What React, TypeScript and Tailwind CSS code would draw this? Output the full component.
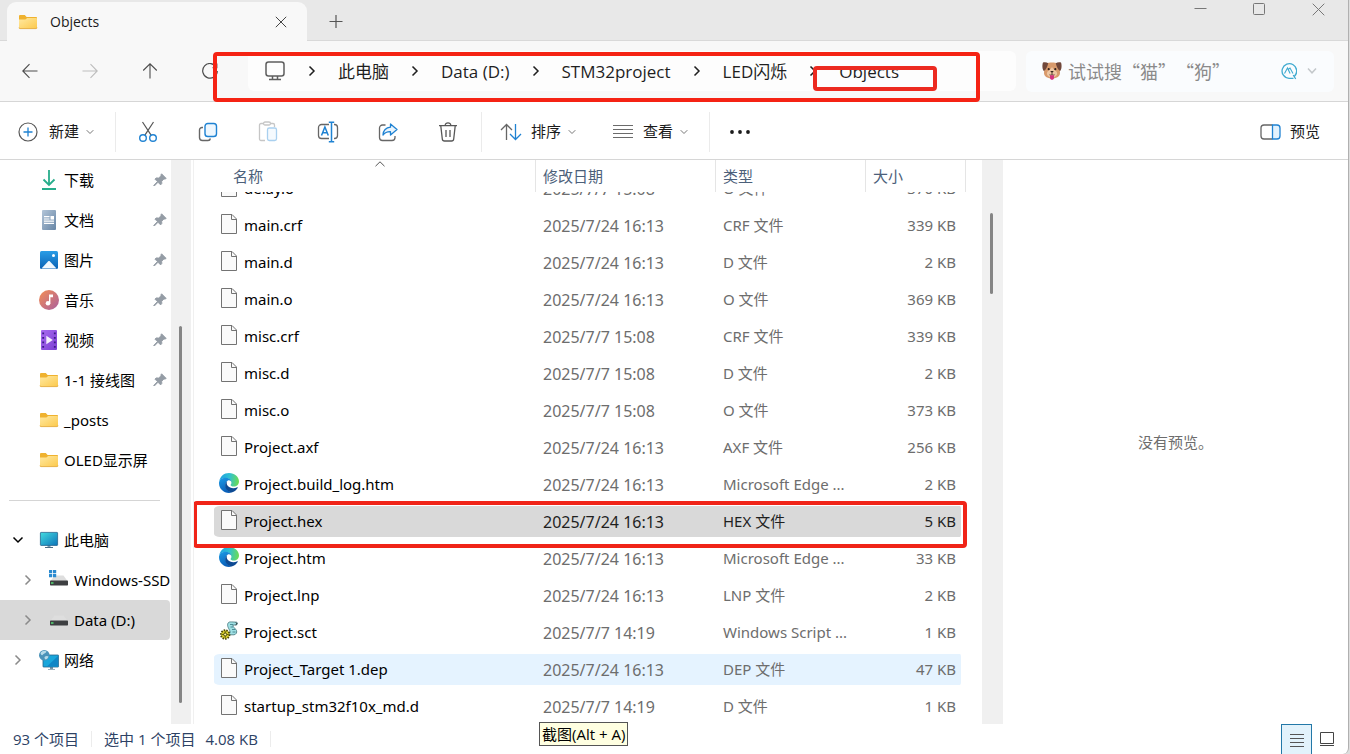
import React, { useEffect, useRef } from 'react';

interface IconProps {
  className?: string
}

const Folder: React.FC = () => (
  <svg width="20" height="16" viewBox="0 0 20 16" className="shrink-0">
    <defs>
      <linearGradient id="folder" x1="0" y1="0" x2="1" y2="1">
        <stop offset="0" stopColor="#ffe9a2" />
        <stop offset="1" stopColor="#fcc94c" />
      </linearGradient>
    </defs>
    <path d="M1 2.2C1 1.5 1.500 1 2.200 1h4.600l1.800 2H18c.6 0 1 .4 1 1v3H1z" fill="#efb22f" />
    <path d="M1 5.600h6.400L9.200 4H18c.6 0 1 .4 1 1v8.600c0 .6-.4 1-1 1H2c-.6 0-1-.4-1-1z" fill="url(#folder)" />
    <path d="M1 13.600c0 .6.4 1 1 1h16c.6 0 1-.4 1-1" fill="none" stroke="#dfa22c" strokeWidth=".8" />
  </svg>
);

const Chevron: React.FC<IconProps> = ({ className }) => (
  <svg width="10" height="12" viewBox="0 0 10 12" fill="none" stroke="currentColor" className={className}>
    <path d="M2.500 1.500 7 6l-4.500 4.500" strokeWidth="1.500" />
  </svg>
);

const ChevronDown: React.FC<IconProps> = ({ className }) => (
  <svg width="8" height="6" viewBox="0 0 8 6" fill="none" stroke="currentColor" className={className}>
    <path d="M.7 1.200 4 4.500l3.300-3.300" />
  </svg>
);

const Arrow: React.FC<IconProps> = ({ className }) => (
  <svg width="16" height="16" viewBox="0 0 16 16" fill="none" stroke="currentColor" strokeWidth="1.100" className={className}>
    <path d="M15.500 8H1M7.500 1.200.8 8l6.700 6.800" />
  </svg>
);

const Pin: React.FC = () => (
  <svg width="14" height="14" viewBox="0 0 14 14" className="shrink-0">
    <path d="M8.600.8 13.200 5.400 12 6.100 10.900 6 8.700 8.300l.1 2.300-1.200 1.300-2.600-2.600L1.300 13l-.6-.6L4.400 8.600 1.900 6.100l1.400-1.200 2.300.1L8 2.900V1.700z" fill="#949ca5" stroke="#949ca5" strokeWidth=".9" strokeLinejoin="round" />
  </svg>
);

const DownloadIcon: React.FC = () => (
  <svg width="20" height="20" viewBox="0 0 20 20" fill="none" stroke="#27ad8b" strokeWidth="1.800">
    <path d="M10 0v15M4.500 9.500 10 15l5.500-5.500M3 19h14" />
  </svg>
);

const DocumentIcon: React.FC = () => (
  <svg width="20" height="20" viewBox="0 0 20 20">
    <defs>
      <linearGradient id="doc" x1="0" y1="0" x2="1" y2="1">
        <stop offset="0" stopColor="#b3c5d8" />
        <stop offset="1" stopColor="#6685a5" />
      </linearGradient>
    </defs>
    <rect x="3" width="14" height="20" rx="1" fill="url(#doc)" />
    <path d="M5 6.600h5.500M5 9h5.500M5 11.200h10M5 13.400h10" stroke="#fff" strokeWidth="1.200" />
    <path d="M11.500 6h3.500v3.600h-3.500z" fill="#fff" />
  </svg>
);

const PictureIcon: React.FC = () => (
  <svg width="20" height="20" viewBox="0 0 20 20">
    <defs>
      <linearGradient id="pic" x1="0" y1="0" x2="0" y2="1">
        <stop offset="0" stopColor="#2a9de6" />
        <stop offset="1" stopColor="#0b62b5" />
      </linearGradient>
    </defs>
    <rect x="1" y="1" width="18" height="18" rx="1.500" fill="url(#pic)" />
    <path d="M2.500 18.500 9 11.400c.6-.6 1.400-.6 2 0l6.500 7.100z" fill="#f1f8fe" />
    <circle cx="14.500" cy="5.500" r="1.500" fill="#fff" />
  </svg>
);

const MusicIcon: React.FC = () => (
  <svg width="20" height="20" viewBox="0 0 20 20">
    <defs>
      <linearGradient id="music" x1="0" y1="0" x2="1" y2="1">
        <stop offset="0.100" stopColor="#ed8a5b" />
        <stop offset="1" stopColor="#a95f9f" />
      </linearGradient>
    </defs>
    <circle cx="10" cy="10" r="10" fill="url(#music)" />
    <path d="M10 4.500h4v2.800h-2.600v6.200h-1.400z" fill="#fff" />
    <circle cx="9" cy="13.200" r="2.300" fill="#fff" />
  </svg>
);

const VideoIcon: React.FC = () => (
  <svg width="20" height="20" viewBox="0 0 20 20">
    <defs>
      <linearGradient id="video" x1="0" y1="0" x2="1" y2="1">
        <stop offset="0" stopColor="#a86af0" />
        <stop offset="1" stopColor="#7b3fd2" />
      </linearGradient>
    </defs>
    <rect x="2" width="16" height="20" rx="1" fill="url(#video)" />
    <path d="M4.200 2.500v16M15.800 2.500v16" stroke="#3b1b85" strokeWidth="1.800" strokeDasharray="1.800 2.700" />
    <path d="M7.300 5.800v8.400l6.500-4.200z" fill="#f5effd" />
  </svg>
);

const PcIcon: React.FC = () => (
  <svg width="20" height="18" viewBox="0 0 20 18">
    <defs>
      <linearGradient id="screen" x1="0" y1="0" x2="1" y2="1">
        <stop offset="0" stopColor="#43dbe0" />
        <stop offset="1" stopColor="#0d74b9" />
      </linearGradient>
    </defs>
    <path d="M8.500 14h3v2.500h-3z" fill="#7d9bb0" />
    <path d="M6 16h8v1H6z" fill="#4c6b82" />
    <rect x="1.400" y="1.400" width="17.200" height="13" rx=".6" fill="url(#screen)" stroke="#23648e" strokeWidth=".8" />
  </svg>
);

const DriveIcon: React.FC<{ system?: boolean }> = ({ system }) => (
  <svg width="20" height="20" viewBox="0 0 20 20" className="shrink-0">
    <path d="M5.500 5.500h9L18.500 11h-17z" fill="#dedede" />
    <rect x="1" y="10.500" width="18" height="5" rx=".7" fill="#3d3f41" />
    <rect x="2" y="12.300" width="2.500" height="1.400" fill="#57e57a" />
    {system && <path d="M0 0h3.200v3.200H0zM4 0h3.200v3.200H4zM0 4h3.200v3.200H0zM4 4h3.200v3.200H4z" fill="#2a8ad0" />}
  </svg>
);

const NetworkIcon: React.FC = () => (
  <svg width="20" height="20" viewBox="0 0 20 20">
    <path d="M11 17h3v2h-3zM9 19h7v.8H9z" fill="#7896a8" />
    <rect x="4" y="5" width="15.600" height="12" rx=".6" fill="#19a6db" stroke="#23648e" strokeWidth=".8" />
    <path d="M19 16.500 19 6 8 16.500z" fill="#0f86c6" />
    <circle cx="5.300" cy="5.300" r="5.300" fill="#4b93b9" />
    <path d="M1.500 3C3 .8 6 .2 7.500 1.500 7 3.500 5 3 4 4.500S2 5 1.500 3zM6 6.500c1.500-1 3-.5 3.500 0C9 8.500 7.500 9.500 6.500 9.500 5.500 8.500 5 7.500 6 6.500z" fill="#b6dbe9" />
  </svg>
);

const FileIcon: React.FC = () => (
  <svg width="20" height="20" viewBox="0 0 20 20">
    <path d="M2.500.5h10.500L17.500 5v14.500h-15z" fill="#fafafa" stroke="#737373" />
    <path d="M12.500.5v5h5" fill="none" stroke="#737373" />
  </svg>
);

const EdgeIcon: React.FC = () => (
  <svg width="20" height="20" viewBox="0 0 20 20">
    <defs>
      <linearGradient id="edgeTop" x1="0" y1=".3" x2="1" y2=".4">
        <stop offset="0" stopColor="#1fa0e0" />
        <stop offset=".5" stopColor="#2fc0d2" />
        <stop offset="1" stopColor="#6bdc55" />
      </linearGradient>
      <linearGradient id="edgeLeft" x1="0" y1="0" x2="0.400" y2="1">
        <stop offset="0" stopColor="#1c9be6" />
        <stop offset="1" stopColor="#0a5fb8" />
      </linearGradient>
    </defs>
    <path d="M.3 8.300C1 3.500 5 0 10 0c5.600 0 10 4 10 8.400 0 3.100-2.400 5.100-5.200 5.100-2 0-3.300-.7-3.300-1.500 0-.5.900-.9.900-2.300C12.400 7.200 9.700 5 6.300 5 3.500 5 1.200 6.500.3 8.300z" fill="url(#edgeTop)" />
    <path d="M0 10.300C0 7 3 4.800 6.300 4.800c3.200 0 5.400 1.700 6 3.700-.9-.9-2.200-1.300-3.300-1.100-2.500.9-2.900 4.800-1.600 7.500 1.100 2.400 3.400 4 5.200 4.700-.8.300-1.700.4-2.600.4-5.500 0-10-4.400-10-9.700z" fill="url(#edgeLeft)" />
    <path d="M8.500 7.700c-3 2.300-2.600 6.200-1 8.600 1.300 2 3.300 3.200 5.100 3.300 2.900-.8 4.900-2.700 6.200-4.900.2-.4-.1-.6-.5-.4-3.600 1.600-7.600.9-9.600-1.600-1.300-1.700-1.300-3.700-.2-5z" fill="#0d4a93" />
  </svg>
);

const ScriptIcon: React.FC = () => (
  <svg width="20" height="20" viewBox="0 0 20 20">
    <path d="M9 2.200C9.500 1 11 .8 12.500.9l5 .3c1.500.3 1.200 2.500-.3 2.800L14 4c-.8 1.500 2.500 3.500 3.500 5.500.8 2-.5 4-2.500 4.300H9c1.500-1 2.500-2 2-3.500C10.500 8.500 7.500 5 9 2.200z" fill="#9fe0e4" stroke="#3f7279" strokeWidth=".8" />
    <path d="M11 3.500h3M11.500 6h2.500M13 8.500h3M13.500 11h3" stroke="#387780" strokeWidth=".8" />
    <path d="M17 1.500c1 .8.800 2-.3 2.300" stroke="#222" fill="none" />
    <circle cx="6.200" cy="13.500" r="4.300" fill="#d9cf2d" stroke="#4d4908" strokeWidth="1.800" strokeDasharray="1.500 1.100" />
    <circle cx="6.200" cy="13.500" r="1.500" fill="#fff9a8" stroke="#4d4908" />
    <path d="M6.200 10v2M6.200 15v2M2.800 13.500h2M7.700 13.500h2" stroke="#4d4908" strokeWidth=".8" />
  </svg>
);

const DogIcon: React.FC = () => (
  <svg width="20" height="18" viewBox="0 0 20 18" className="shrink-0">
    <path d="M4.500 1.500C7 .2 13 .2 15.500 1.500c1.800 3 2.500 6.500 2.500 9.500 0 3-3 5.500-8 5.500S2 14 2 11c0-3 .7-6.500 2.500-9.500z" fill="#d89a6c" />
    <path d="M10 5c1 2 2.500 2.500 4 4 1.500 1.800 1.500 3.500 0 5-2 1.800-6 1.800-8 0-1.500-1.500-1.500-3.200 0-5 1.500-1.500 3-2 4-4z" fill="#eec6a2" />
    <path d="M1 .5C3 0 5 .3 6.200 1.300 5.500 4 4.500 7.500 2 9 .3 8 0 3 1 .5zM19 .5c-2-.5-4-.2-5.200.8.7 2.700 1.700 6.200 4.200 7.700 1.700-1 2-6 1-8.500z" fill="#70473a" />
    <circle cx="6.700" cy="7.200" r="1.100" fill="#34221d" />
    <circle cx="13.300" cy="7.200" r="1.100" fill="#34221d" />
    <path d="M8.200 9h3.600L10 11z" fill="#34221d" />
    <path d="M10 10.500v2M7.500 12.800c1 .5 2 .3 2.500-.4.500.7 1.500.9 2.500.4" stroke="#34221d" fill="none" strokeWidth=".8" />
    <path d="M8 13.200h4v2.600c0 2.700-4 2.700-4 0z" fill="#d43480" />
  </svg>
);

const pinned = [
  { name: '下载', icon: <DownloadIcon />, pin: true },
  { name: '文档', icon: <DocumentIcon />, pin: true },
  { name: '图片', icon: <PictureIcon />, pin: true },
  { name: '音乐', icon: <MusicIcon />, pin: true },
  { name: '视频', icon: <VideoIcon />, pin: true },
  { name: '1-1 接线图', icon: <Folder />, pin: true },
  { name: '_posts', icon: <Folder />, pin: false },
  { name: 'OLED显示屏', icon: <Folder />, pin: false },
];

const path = ['此电脑', 'Data (D:)', 'STM32project', 'LED闪烁', 'Objects'];

interface FileRow {
  name: string
  date: string
  type: string
  size: string
  icon?: 'edge' | 'script'
  state?: 'selected' | 'hover'
}

const files: FileRow[] = [
  { name: 'delay.o', date: '2025/7/7 15:08', type: 'O 文件', size: '370 KB' },
  { name: 'main.crf', date: '2025/7/24 16:13', type: 'CRF 文件', size: '339 KB' },
  { name: 'main.d', date: '2025/7/24 16:13', type: 'D 文件', size: '2 KB' },
  { name: 'main.o', date: '2025/7/24 16:13', type: 'O 文件', size: '369 KB' },
  { name: 'misc.crf', date: '2025/7/7 15:08', type: 'CRF 文件', size: '339 KB' },
  { name: 'misc.d', date: '2025/7/7 15:08', type: 'D 文件', size: '2 KB' },
  { name: 'misc.o', date: '2025/7/7 15:08', type: 'O 文件', size: '373 KB' },
  { name: 'Project.axf', date: '2025/7/24 16:13', type: 'AXF 文件', size: '256 KB' },
  { name: 'Project.build_log.htm', date: '2025/7/24 16:13', type: 'Microsoft Edge ...', size: '2 KB', icon: 'edge' },
  { name: 'Project.hex', date: '2025/7/24 16:13', type: 'HEX 文件', size: '5 KB', state: 'selected' },
  { name: 'Project.htm', date: '2025/7/24 16:13', type: 'Microsoft Edge ...', size: '33 KB', icon: 'edge' },
  { name: 'Project.lnp', date: '2025/7/24 16:13', type: 'LNP 文件', size: '2 KB' },
  { name: 'Project.sct', date: '2025/7/7 14:19', type: 'Windows Script ...', size: '1 KB', icon: 'script' },
  { name: 'Project_Target 1.dep', date: '2025/7/24 16:13', type: 'DEP 文件', size: '47 KB', state: 'hover' },
  { name: 'startup_stm32f10x_md.d', date: '2025/7/7 14:19', type: 'D 文件', size: '1 KB' },
];

const TitleBar: React.FC = () => (
  <header className="flex h-[41px] shrink-0 bg-[#e8e8e8] shadow-[inset_0_-1px_0_#d9d9d9]">
    <div className="relative ml-[7px] mt-0.5 flex w-[300px] items-center rounded-t-[9px] bg-[#f8f8f8] pl-[11px] pr-5">
      <Folder />
      <span className="ml-3 flex-1 text-[14px] font-medium text-[#1b1b1b]">Objects</span>
      <button aria-label="关闭标签页">
        <svg width="12" height="12" viewBox="0 0 12 12" stroke="#444" fill="none">
          <path d="m.8.800 10.400 10.400M11.200.800.8 11.200" />
        </svg>
      </button>
    </div>
    <button aria-label="新建标签页" className="ml-[22px]">
      <svg width="14" height="14" viewBox="0 0 14 14" stroke="#555" fill="none">
        <path d="M7 1v13M.5 7.500h13" strokeWidth="1.200" />
      </svg>
    </button>
    <div className="ml-auto flex items-start text-[#777]">
      <button aria-label="最小化" className="flex h-[18px] w-[59px] items-center justify-center">
        <svg width="13" height="13" viewBox="0 0 13 13" stroke="currentColor"><path d="M.5 5.500h12" /></svg>
      </button>
      <button aria-label="最大化" className="flex h-[18px] w-[59px] items-center justify-center">
        <svg width="13" height="13" viewBox="0 0 13 13" stroke="currentColor" fill="none"><rect x=".5" y=".5" width="11" height="11" rx="1" /></svg>
      </button>
      <button aria-label="关闭" className="flex h-[18px] w-[59px] items-center justify-center">
        <svg width="13" height="13" viewBox="0 0 13 13" stroke="currentColor" fill="none"><path d="m.7.700 11.600 11.600M12.300.700.7 12.300" /></svg>
      </button>
    </div>
  </header>
);

const NavBar: React.FC = () => (
  <nav className="relative flex h-[61px] shrink-0 items-center border-b border-[#d6d6d6] bg-[#f8f8f8] pr-3.5 text-[#4c4c4c]">
    <button aria-label="后退" className="flex w-[60px] justify-center"><Arrow /></button>
    <button aria-label="前进" className="flex w-[60px] justify-center text-[#bdbdbd]"><Arrow className="rotate-180" /></button>
    <button aria-label="向上" className="flex w-[60px] justify-center"><Arrow className="rotate-90" /></button>
    <button aria-label="刷新" className="flex w-[60px] justify-center">
      <svg width="16" height="16" viewBox="0 0 16 16" fill="none" stroke="currentColor" strokeWidth="1.200">
        <path d="M14.500 4.500A7.300 7.300 0 1 0 15.300 8M14.800.500v4.200h-4.200" />
      </svg>
    </button>
    <div className="ml-2 flex h-10 flex-1 items-center rounded-md bg-[#fdfdfd] pl-4 text-[#1f1f1f]">
      <svg width="22" height="20" viewBox="0 0 22 20" fill="none" stroke="#5e5e5e" strokeWidth="1.500">
        <rect x="2" y="1" width="18" height="14" rx="2.500" />
        <path d="M8.500 15v3.500M13.500 15v3.500M5 18.600h12" />
      </svg>
      {path.map((item) => (
        <React.Fragment key={item}>
          <span className="flex w-[52px] justify-center"><Chevron /></span>
          <a href="#" className="pt-px text-[17px]">{item}</a>
        </React.Fragment>
      ))}
    </div>
    <div className="ml-2.5 flex h-[41px] w-[308px] items-center rounded-md bg-[#fafcfe] pl-4 pr-[17px]">
      <DogIcon />
      <input
        aria-label="搜索"
        placeholder="试试搜“猫”“狗”"
        className="ml-1.5 min-w-0 flex-1 bg-transparent font-['Noto_Sans_CJK_SC',sans-serif] text-[18px] outline-none [text-spacing-trim:space-all] placeholder:text-[#8a8a8a]"
      />
      <svg width="16" height="17" viewBox="0 0 16 17" fill="none" stroke="#41abd0">
        <path d="M13.500 13.200A7.300 7.300 0 1 0 8 15.300h4.500M12.200 12l2.500 4" strokeWidth="1.300" />
        <path d="m3.500 10.500 3-5.500 2.600 5.500M7.500 6.200 9 5l3 5.500" strokeWidth="1.100" />
      </svg>
      <svg width="10" height="8" viewBox="0 0 10 8" fill="none" stroke="#c4c8cb" strokeWidth="1.500" className="ml-[10px]">
        <path d="m1 1.500 4 4.300 4-4.300" />
      </svg>
    </div>
    {/* highlight frames over the path */}
    <div className="pointer-events-none absolute bottom-[-1px] left-[213px] right-[368px] top-[11px] rounded-sm border-4 border-[#f52314]" />
    <div className="pointer-events-none absolute left-[813px] top-[25px] h-[25px] w-[124px] rounded-sm border-4 border-[#ec2a20]" />
  </nav>
);

const Separator: React.FC = () => <div className="h-10 w-px bg-[#ebebeb]" />;

const tool = 'flex w-[60px] justify-center';

const Toolbar: React.FC = () => (
  <div className="flex h-[58px] shrink-0 items-center border-b border-[#d6d6d6] bg-white pt-0.5 text-[15px] text-[#1b1b1b]">
    <button className="flex w-[115px] items-center pl-[18px]">
      <svg width="20" height="20" viewBox="0 0 20 20" fill="none">
        <circle cx="10" cy="10" r="9" stroke="#575757" strokeWidth="1.200" />
        <path d="M10 5.500v9M5.500 10h9" stroke="#1f82d2" strokeWidth="1.300" />
      </svg>
      <span className="ml-[11px]">新建</span>
      <ChevronDown className="ml-[7px] text-[#777]" />
    </button>
    <Separator />
    <div className="ml-0.5 mr-[3px] flex items-center">
      <button aria-label="剪切" className={tool}>
        <svg width="20" height="22" viewBox="0 0 20 22" fill="none" strokeWidth="1.200">
          <path d="m4.500 1 8.600 13.200M15.500 1 6.900 14.200" stroke="#575757" />
          <circle cx="5" cy="17" r="3.300" stroke="#1f82d2" strokeWidth="1.400" />
          <circle cx="15" cy="17" r="3.300" stroke="#1f82d2" strokeWidth="1.400" />
        </svg>
      </button>
      <button aria-label="复制" className={tool}>
        <svg width="20" height="20" viewBox="0 0 20 20" fill="none" strokeWidth="1.400">
          <path d="M5 5.500H4a2.500 2.500 0 0 0-2.500 2.500v7.500A3 3 0 0 0 4.500 18.500h5.500a2.500 2.500 0 0 0 2.400-2" stroke="#666" />
          <rect x="7" y="1.500" width="11.500" height="13" rx="2.800" stroke="#1f82d2" fill="#eef7fe" />
        </svg>
      </button>
      <button aria-label="粘贴" className={tool}>
        <svg width="20" height="21" viewBox="0 0 20 21" fill="none" strokeWidth="1.300">
          <path d="M7 19.500H3A1.500 1.500 0 0 1 1.500 18V4A1.500 1.500 0 0 1 3 2.500h2.500M12.500 2.500H15A1.500 1.500 0 0 1 16.500 4v2" stroke="#c6c6c6" />
          <rect x="5.500" y="1" width="7" height="3" rx="1.500" stroke="#c6c6c6" />
          <rect x="9.500" y="7" width="9" height="12.500" rx="1.800" stroke="#a9d0ef" fill="#f5fafe" />
        </svg>
      </button>
      <button aria-label="重命名" className={tool}>
        <svg width="22" height="22" viewBox="0 0 22 22" fill="none" strokeWidth="1.300">
          <path d="M12 3.500H4.500A3 3 0 0 0 1.500 6.500v8a3 3 0 0 0 3 3H12M17 3.500h.5a3 3 0 0 1 3 3v8a3 3 0 0 1-3 3H17" stroke="#666" />
          <path d="M14.500 1.500v19M11.800 1.200h5.400M11.800 20.700h5.400" stroke="#1f82d2" strokeWidth="1.500" />
          <path d="m4.500 14.500 3.400-8.500 3.400 8.500M5.700 11.700h4.500" stroke="#1f82d2" strokeWidth="1.500" />
        </svg>
      </button>
      <button aria-label="共享" className={tool}>
        <svg width="20" height="20" viewBox="0 0 20 20" fill="none" strokeWidth="1.300" strokeLinejoin="round">
          <path d="M7.500 3H4.500a3 3 0 0 0-3 3v9.500a3 3 0 0 0 3 3h9.500a3 3 0 0 0 3-3V14" stroke="#666" />
          <path d="M12.500 2 19 7.500l-6.500 5.500v-3.300C9 9.500 7 10.500 5 13c.3-4.500 3-7.300 7.500-7.800z" stroke="#1f82d2" fill="#eaf5fd" />
        </svg>
      </button>
      <button aria-label="删除" className={tool}>
        <svg width="20" height="20" viewBox="0 0 20 20" fill="none" stroke="#575757" strokeWidth="1.300">
          <path d="M1 3.700h18M7.200 3.500c0-3.400 5.600-3.400 5.600 0M2.800 4l1.500 13c.1 1.200 1 2 2.200 2h7c1.200 0 2.100-.8 2.200-2l1.500-13M8 8v7M12 8v7" />
        </svg>
      </button>
    </div>
    <Separator />
    <button className="flex w-[112px] items-center pl-[18px]">
      <svg width="22" height="18" viewBox="0 0 22 18" fill="none" strokeWidth="1.300">
        <path d="M6.500 17V1.500M1 7l5.500-5.500L12 7" stroke="#666" />
        <path d="M15.500 1v15.500M10 11l5.500 5.500L21 11" stroke="#1f82d2" />
      </svg>
      <span className="ml-[9px]">排序</span>
      <ChevronDown className="ml-[7px] text-[#777]" />
    </button>
    <button className="flex w-[115px] items-center pl-[18px]">
      <svg width="22" height="14" viewBox="0 0 22 14" stroke="#6b6b6b">
        <path d="M1 .5h20M1 4.500h20M1 8.500h20M1 12.500h20" />
      </svg>
      <span className="ml-[9px]">查看</span>
      <ChevronDown className="ml-[7px] text-[#777]" />
    </button>
    <Separator />
    <button aria-label="查看更多" className={tool}>
      <svg width="20" height="4" viewBox="0 0 20 4" fill="#1b1b1b">
        <circle cx="2" cy="2" r="1.900" />
        <circle cx="10" cy="2" r="1.900" />
        <circle cx="18" cy="2" r="1.900" />
      </svg>
    </button>
    <button className="ml-auto mr-7 flex items-center gap-[9px]">
      <svg width="21" height="16" viewBox="0 0 21 16" fill="none" strokeWidth="1.300">
        <path d="M12.500 1H4A3 3 0 0 0 1 4v8a3 3 0 0 0 3 3h8.500" stroke="#666" />
        <path d="M12.500 1H17a3 3 0 0 1 3 3v8a3 3 0 0 1-3 3h-4.500z" stroke="#1f82d2" fill="#e3f2fd" />
      </svg>
      预览
    </button>
  </div>
);

const Sidebar: React.FC = () => (
  <aside className="flex shrink-0 text-[15px] text-black">
    <div className="w-[171px] overflow-hidden whitespace-nowrap pr-px">
      {pinned.map((item) => (
        <a key={item.name} href="#" className="flex h-10 items-center pl-[39px] pr-[3px]">
          {item.icon}
          <span className="ml-[5px] flex-1">{item.name}</span>
          {item.pin && <Pin />}
        </a>
      ))}
      <div className="flex h-10 items-center pl-[9px] pr-2.5">
        <hr className="flex-1 border-[#d5d5d5]" />
      </div>
      <a href="#" className="flex h-10 items-center pl-[13px]">
        <Chevron className="rotate-90" />
        <span className="ml-4"><PcIcon /></span>
        <span className="ml-[5px]">此电脑</span>
      </a>
      <a href="#" className="flex h-10 items-center pl-[23px]">
        <Chevron className="shrink-0 text-[#8a8a8a]" />
        <span className="ml-4 shrink-0"><DriveIcon system /></span>
        <span className="ml-[5px] overflow-hidden">Windows-SSD</span>
      </a>
      <a href="#" className="flex h-10 items-center rounded-r-sm bg-[#d9d9d9] pl-[23px]">
        <Chevron className="text-[#8a8a8a]" />
        <span className="ml-4"><DriveIcon /></span>
        <span className="ml-[5px]">Data (D:)</span>
      </a>
      <a href="#" className="flex h-10 items-center pl-[13px]">
        <Chevron className="text-[#8a8a8a]" />
        <span className="ml-4"><NetworkIcon /></span>
        <span className="ml-[5px]">网络</span>
      </a>
    </div>
    <div className="flex w-5 bg-[#f0f0f0] pb-[21px] pl-2 pt-[166px]">
      <div className="w-[3px] rounded-full bg-[#858585]" />
    </div>
  </aside>
);

const FileList: React.FC = () => {
  const scroller = useRef<HTMLDivElement>(null);

  useEffect(() => {
    if (scroller.current) scroller.current.scrollTop = 22;
  }, []);

  return (
    <section className="ml-0.5 flex min-w-0 flex-1 border-l border-[#f0f0f0]">
      <div ref={scroller} className="min-w-0 flex-1 overflow-auto pl-5 [scrollbar-width:none]">
        <table className="w-[752px] table-fixed border-separate border-spacing-0 text-left text-[15px] text-[#6d6d6d]">
          <thead className="sticky top-0 z-10 bg-white text-[#4c607a]">
            <tr className="h-8">
              <th className="relative w-[322px] border-r border-[#e5e5e5] pl-[19px] font-normal">
                名称
                <svg width="10" height="6" viewBox="0 0 10 6" fill="none" stroke="#555" className="absolute left-[161px] top-px">
                  <path d="M.5 5.200 5 .800l4.500 4.400" />
                </svg>
              </th>
              <th className="w-[180px] border-r border-[#e5e5e5] pl-[7px] font-normal">修改日期</th>
              <th className="w-[150px] border-r border-[#e5e5e5] pl-[7px] font-normal">类型</th>
              <th className="w-[100px] border-r border-[#e5e5e5] pl-[7px] font-normal">大小</th>
            </tr>
          </thead>
          <tbody>
            {files.map((file) => (
              <tr
                key={file.name}
                className={
                  file.state === 'selected'
                    ? 'h-[37px] text-[#1f1f1f] *:bg-[#d9d9d9]'
                    : file.state === 'hover'
                      ? 'h-[37px] *:bg-[#e5f3ff]'
                      : 'h-[37px]'
                }
              >
                <td className="relative rounded-l-md border-y-[3px] border-transparent bg-clip-padding p-0">
                  <div className="flex items-center pl-[5px] text-black">
                    <span className="pb-1">
                      {file.icon === 'edge' ? <EdgeIcon /> : file.icon === 'script' ? <ScriptIcon /> : <FileIcon />}
                    </span>
                    <span className="ml-[5px]">{file.name}</span>
                  </div>
                  {file.state === 'selected' && (
                    <div className="pointer-events-none absolute left-[-21px] top-[-5px] z-20 h-[47px] w-[774px] rounded-sm border-4 border-[#f02418]" />
                  )}
                </td>
                <td className="border-y-[3px] border-transparent bg-clip-padding p-0 pl-[7px] text-base">{file.date}</td>
                <td className="border-y-[3px] border-transparent bg-clip-padding p-0 pl-[7px]">{file.type}</td>
                <td className="rounded-r-md border-y-[3px] border-r-[5px] border-transparent bg-clip-padding p-0 pr-[5px] text-right">{file.size}</td>
              </tr>
            ))}
          </tbody>
        </table>
      </div>
      <div className="w-5 bg-[#f0f0f0] pl-2 pt-[53px]">
        <div className="h-[81px] w-[3px] rounded-full bg-[#858585]" />
      </div>
    </section>
  );
};

const StatusBar: React.FC = () => (
  <footer className="relative flex h-[30px] shrink-0 items-center pl-[13px] text-[15px] text-[#2d4265]">
    <span>93 个项目</span>
    <div className="ml-3 h-4 w-px bg-[#ececec]" />
    <span className="ml-3">选中 1 个项目</span>
    <span className="ml-2.5">4.08 KB</span>
    <div className="ml-3 h-4 w-px bg-[#ececec]" />
    <button aria-label="详细信息" className="ml-auto flex h-full w-[31px] items-center justify-center border border-b-0 border-[#2378a8] bg-[#e2f2fb]">
      <svg width="14" height="14" viewBox="0 0 14 14" stroke="#555"><path d="M0 1.500h14M0 5.500h14M0 9.500h14M0 13.500h14" /></svg>
    </button>
    <button aria-label="大图标" className="ml-2 mr-3.5">
      <svg width="14" height="14" viewBox="0 0 14 14" stroke="#444" fill="none"><path d="M.5.500h13v11H.5zM0 13.500h14" /></svg>
    </button>
    <div role="tooltip" className="absolute left-[539px] top-[-2px] z-20 whitespace-nowrap border border-[#555] bg-[#ffffe1] px-0.5 text-[15px] leading-[22px] text-black">
      截图(Alt + A)
    </div>
  </footer>
);

const App: React.FC = () => {
  return (
    <div className="bg-[#dedede] pr-px">
      <div className="flex h-screen flex-col overflow-hidden rounded-br-md border-r border-[#b0b0b0] bg-white font-['Open_Sans','Noto_Sans_CJK_SC',sans-serif]">
        <TitleBar />
        <NavBar />
        <Toolbar />
        <main className="flex min-h-0 flex-1 font-['Noto_Sans','Noto_Sans_CJK_SC',sans-serif]">
          <Sidebar />
          <FileList />
          <section className="flex w-[346px] shrink-0 items-center justify-center border-l border-[#f0f0f0] text-[15px] text-[#6d6d6d]">
            没有预览。
          </section>
        </main>
        <StatusBar />
      </div>
    </div>
  );
};

export default App;
